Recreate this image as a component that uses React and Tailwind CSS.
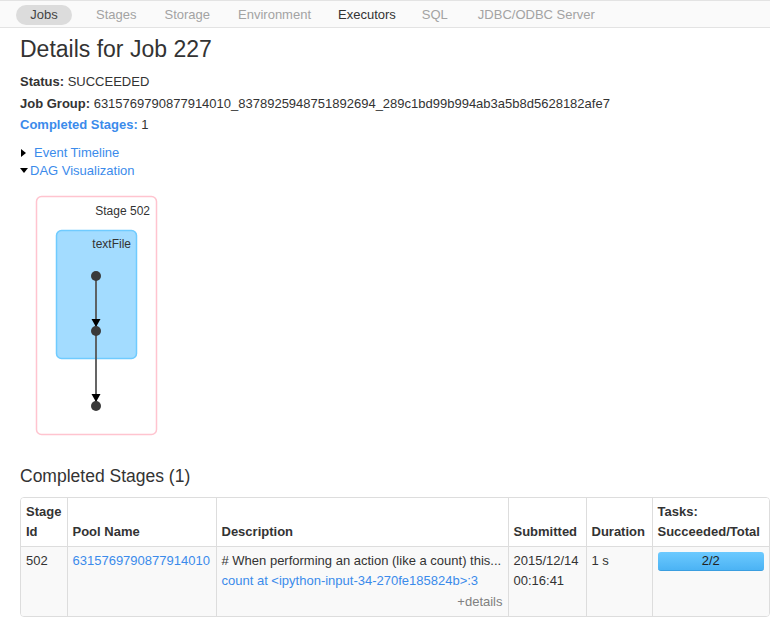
import React from 'react'

const font = { fontFamily: '"Liberation Sans", Arial, Helvetica, sans-serif' }

const navItems = [
  { label: 'Stages', ml: 'ml-[24px]', tone: 'text-[#a3a3a3]' },
  { label: 'Storage', ml: 'ml-[28px]', tone: 'text-[#a3a3a3]' },
  { label: 'Environment', ml: 'ml-[28px]', tone: 'text-[#a3a3a3]' },
  { label: 'Executors', ml: 'ml-[27px]', tone: 'text-[#333]' },
  { label: 'SQL', ml: 'ml-[26px]', tone: 'text-[#a3a3a3]' },
  { label: 'JDBC/ODBC Server', ml: 'ml-[30px]', tone: 'text-[#a3a3a3]' },
]

function NavBar() {
  return (
    <div className="flex h-[28px] items-center border-y border-[#e3e3e3] bg-[#fafafa] pl-[16px] pt-[1px] text-[13px]">
      <span className="flex h-[20px] w-[56px] items-center justify-center rounded-full bg-[#dcdcdc] text-[#444]">
        Jobs
      </span>
      {navItems.map((item) => (
        <span key={item.label} className={`${item.ml} ${item.tone}`}>
          {item.label}
        </span>
      ))}
    </div>
  )
}

function DagViz() {
  return (
    <svg width="150" height="250" className="mt-[10px] block">
      <rect x="16.5" y="6.5" width="120" height="238" rx="5" fill="#fff" stroke="#ffc4cf" strokeWidth="1.5" />
      <text x="130" y="25" textAnchor="end" fontSize="12" fill="#333" style={font}>Stage 502</text>
      <rect x="36.5" y="40.5" width="80" height="128" rx="5" fill="#a3dcff" stroke="#6fcbff" strokeWidth="1.5" />
      <text x="111" y="58" textAnchor="end" fontSize="12" fill="#333" style={font}>textFile</text>
      <line x1="76" y1="86" x2="76" y2="212" stroke="#555" strokeWidth="1.8" />
      <polygon points="71.5,129 80.5,129 76,137" fill="#000" />
      <polygon points="71.5,204 80.5,204 76,212" fill="#000" />
      <circle cx="76" cy="86" r="5" fill="#3a3a3a" />
      <circle cx="76" cy="141" r="5" fill="#3a3a3a" />
      <circle cx="76" cy="216" r="5" fill="#3a3a3a" />
    </svg>
  )
}

function StagesTable() {
  const th = 'border-l border-[#dddddd] px-[5px] pb-[4px] pt-[4px] text-left align-bottom font-bold leading-[20px]'
  const td = 'border-l border-t border-[#dddddd] px-[5px] pb-[4px] pt-[4px] align-top leading-[20px]'
  return (
    <div className="mt-[9px] w-[750px] overflow-hidden rounded-[4px] border border-[#dddddd]">
      <table className="w-full table-fixed border-collapse text-[13px] text-[#333]">
        <colgroup>
          <col className="w-[46px]" />
          <col className="w-[149px]" />
          <col className="w-[292px]" />
          <col className="w-[78px]" />
          <col className="w-[66px]" />
          <col />
        </colgroup>
        <thead>
          <tr className="bg-white">
            <th className={`${th} border-l-0`}>Stage<br />Id</th>
            <th className={th}>Pool Name</th>
            <th className={th}>Description</th>
            <th className={th}>Submitted</th>
            <th className={th}>Duration</th>
            <th className={`${th} whitespace-nowrap`}>Tasks:<br />Succeeded/Total</th>
          </tr>
        </thead>
        <tbody>
          <tr className="bg-[#f9f9f9]">
            <td className={`${td} border-l-0`}>502</td>
            <td className={td}>
              <span className="text-[#3b8beb]">6315769790877914010</span>
            </td>
            <td className={`${td} whitespace-nowrap`}>
              <div>
                # When performing an action (like a count) this...
              </div>
              <div className="text-[#3b8beb]">count at &lt;ipython-input-34-270fe185824b&gt;:3</div>
              <div className="mt-[1px] text-right text-[#808080]">+details</div>
            </td>
            <td className={td}>
              2015/12/14
              <br />
              00:16:41
            </td>
            <td className={td}>1 s</td>
            <td className={td}>
              <div className="mt-[1px] flex h-[19px] items-center justify-center rounded-[3px] border-b border-[#3a9ee0] bg-gradient-to-b from-[#6ccaff] to-[#4bb3f4] text-[#222] leading-none">
                2/2
              </div>
            </td>
          </tr>
        </tbody>
      </table>
    </div>
  )
}

export default function App() {
  return (
    <div className="min-h-[632px] w-[770px] overflow-hidden bg-white text-[#333]" style={font}>
      <NavBar />
      <div className="px-[20px]">
        <h3 className="mt-[7px] text-[23px] leading-[28px] font-normal">Details for Job 227</h3>
        <div className="mt-[8px] text-[13px] leading-[21.5px]">
          <div>
            <strong>Status:</strong> SUCCEEDED
          </div>
          <div>
            <strong>Job Group:</strong> 6315769790877914010_8378925948751892694_289c1bd99b994ab3a5b8d5628182afe7
          </div>
          <div>
            <strong className="text-[#3b8beb]">Completed Stages:</strong> 1
          </div>
        </div>
        <div className="mt-[8px] text-[13px] leading-[18px]">
          <div className="flex items-center">
            <span className="ml-[1px] inline-block h-0 w-0 border-y-[4.5px] border-l-[5px] border-y-transparent border-l-black" />
            <span className="ml-[8px] text-[#3b8beb]">Event Timeline</span>
          </div>
          <div className="flex items-center">
            <span className="inline-block h-0 w-0 border-x-[4.5px] border-t-[5px] border-x-transparent border-t-black" />
            <span className="ml-[2px] text-[#3b8beb]">DAG Visualization</span>
          </div>
        </div>
        <DagViz />
        <h4 className="mt-[24px] text-[17.5px] leading-[24px] font-normal">Completed Stages (1)</h4>
        <StagesTable />
      </div>
    </div>
  )
}
